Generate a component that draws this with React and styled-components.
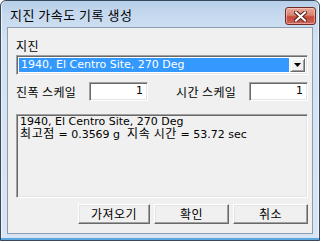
import React from "react";
import styled, { createGlobalStyle } from "styled-components";

const GlobalStyle = createGlobalStyle`
  html, body {
    margin: 0;
    padding: 0;
    background: #ffffff;
  }
  body {
    font-family: "Noto Sans CJK KR", "DejaVu Sans", sans-serif;
  }
`;

const Window = styled.div`
  box-sizing: border-box;
  width: 320px;
  height: 241px;
  display: flex;
  flex-direction: column;
  border: 1px solid #39475a;
  border-radius: 6px 6px 0 0;
  background: linear-gradient(to bottom, #b7cfe9 0px, #c6d9ee 14px, #d3e2f3 40px, #d8e5f4 100%);
  box-shadow: inset 0 -2px 0 #58a7dd, inset 1px 0 0 #eef4fb, inset -1px 0 0 #eef4fb;
  overflow: hidden;
`;

const TitleBar = styled.div`
  height: 26px;
  display: flex;
  align-items: flex-start;
  justify-content: space-between;
  padding: 0 3px 0 9px;
`;

const Title = styled.span`
  margin-top: 5px;
  font-size: 13px;
  line-height: 17px;
  letter-spacing: 0.5px;
  color: #000;
`;

const CloseButton = styled.div`
  margin-top: 6px;
  width: 29px;
  height: 16px;
  border: 1px solid #6e2c24;
  border-radius: 3px;
  background: linear-gradient(to bottom, #e9a99b 0%, #d8826f 45%, #c5473a 55%, #d0645a 100%);
  display: flex;
  align-items: center;
  justify-content: center;
  box-shadow: inset 0 0 0 1px rgba(255, 220, 210, 0.5);
`;

const Client = styled.div`
  flex: 1;
  margin: 0 6px 6px 6px;
  background: #f0f0f0;
  border: 1px solid #8d9cae;
  padding: 10px 4px 0 8px;
  display: flex;
  flex-direction: column;
`;

const FieldLabel = styled.div`
  font-size: 12px;
  line-height: 16px;
  letter-spacing: 0.4px;
  color: #000;
  height: 16px;
  margin-bottom: 1px;
`;

const Combo = styled.div`
  box-sizing: border-box;
  height: 20px;
  display: flex;
  border-top: 1px solid #a0a0a0;
  border-left: 1px solid #a0a0a0;
  border-right: 1px solid #ffffff;
  border-bottom: 1px solid #ffffff;
  box-shadow: inset 1px 1px 0 #696969, inset -1px -1px 0 #e3e3e3;
  padding: 2px;
  background: #fff;
`;

const ComboValue = styled.div`
  flex: 1;
  background: #3399ff;
  color: #fff;
  font-family: "DejaVu Sans", sans-serif;
  font-size: 11px;
  line-height: 14px;
  padding-left: 2px;
  white-space: nowrap;
  overflow: hidden;
`;

const ComboButton = styled.div`
  box-sizing: border-box;
  width: 15px;
  height: 14px;
  margin-left: 1px;
  background: #f0f0f0;
  border-top: 1px solid #f0f0f0;
  border-left: 1px solid #f0f0f0;
  border-right: 1px solid #696969;
  border-bottom: 1px solid #696969;
  box-shadow: inset 1px 1px 0 #ffffff, inset -1px -1px 0 #a0a0a0;
  display: flex;
  align-items: center;
  justify-content: center;
`;

const ScaleRow = styled.div`
  display: flex;
  justify-content: space-between;
  margin-top: 7px;
  height: 19px;
`;

const ScaleGroup = styled.div`
  display: flex;
  align-items: center;
`;

const ScaleLabel = styled.span`
  width: 73px;
  font-size: 12px;
  line-height: 16px;
  letter-spacing: 0.4px;
  color: #000;
`;

const NumberBox = styled.div`
  box-sizing: border-box;
  width: 59px;
  height: 19px;
  background: #fff;
  border-top: 1px solid #a0a0a0;
  border-left: 1px solid #a0a0a0;
  border-right: 1px solid #ffffff;
  border-bottom: 1px solid #ffffff;
  box-shadow: inset 1px 1px 0 #696969, inset -1px -1px 0 #e3e3e3;
  font-family: "DejaVu Sans", sans-serif;
  font-size: 11px;
  line-height: 16px;
  text-align: right;
  padding-right: 4px;
  color: #000;
`;

const InfoBox = styled.div`
  box-sizing: border-box;
  margin-top: 13px;
  height: 84px;
  border-top: 1px solid #a0a0a0;
  border-left: 1px solid #a0a0a0;
  border-right: 1px solid #ffffff;
  border-bottom: 1px solid #ffffff;
  box-shadow: inset 1px 1px 0 #696969, inset -1px -1px 0 #e3e3e3;
  padding: 2px 3px 0 3px;
  color: #000;
`;

const InfoLine = styled.div`
  font-family: "DejaVu Sans", sans-serif;
  font-size: 11px;
  line-height: ${(p) => (p.$tall ? "12px" : "10px")};
  white-space: nowrap;
`;

const Hangul = styled.span`
  font-family: "Noto Sans CJK KR", sans-serif;
  font-size: 12px;
  letter-spacing: 0.6px;
`;

const ButtonRow = styled.div`
  display: flex;
  justify-content: flex-end;
  gap: 4px;
  margin-top: 6px;
`;

const Button = styled.div`
  box-sizing: border-box;
  width: ${(p) => p.$w}px;
  height: 20px;
  background: #f0f0f0;
  border-top: 1px solid #ffffff;
  border-left: 1px solid #ffffff;
  border-right: 1px solid #696969;
  border-bottom: 1px solid #696969;
  box-shadow: inset -1px -1px 0 #a0a0a0, inset 1px 1px 0 #e3e3e3;
  font-size: 12px;
  line-height: 17px;
  letter-spacing: 0.4px;
  text-align: center;
  color: #000;
`;

export default function App() {
  return (
    <>
      <GlobalStyle />
      <Window>
        <TitleBar>
          <Title>지진 가속도 기록 생성</Title>
          <CloseButton>
            <svg width="13" height="11" viewBox="0 0 13 11">
              <path d="M2 1.5 L11 9.5 M11 1.5 L2 9.5" stroke="#5a2018" strokeWidth="4" strokeLinecap="square" />
              <path d="M2 1.5 L11 9.5 M11 1.5 L2 9.5" stroke="#ffffff" strokeWidth="2" strokeLinecap="square" />
            </svg>
          </CloseButton>
        </TitleBar>
        <Client>
          <FieldLabel>지진</FieldLabel>
          <Combo>
            <ComboValue>1940, El Centro Site, 270 Deg</ComboValue>
            <ComboButton>
              <svg width="7" height="4" viewBox="0 0 7 4">
                <path d="M0 0 H7 L3.5 4 Z" fill="#000" />
              </svg>
            </ComboButton>
          </Combo>
          <ScaleRow>
            <ScaleGroup>
              <ScaleLabel>진폭 스케일</ScaleLabel>
              <NumberBox>1</NumberBox>
            </ScaleGroup>
            <ScaleGroup>
              <ScaleLabel>시간 스케일</ScaleLabel>
              <NumberBox>1</NumberBox>
            </ScaleGroup>
          </ScaleRow>
          <InfoBox>
            <InfoLine>1940, El Centro Site, 270 Deg</InfoLine>
            <InfoLine $tall>
              <Hangul>최고점</Hangul> = 0.3569 g&nbsp;&nbsp;<Hangul>지속 시간</Hangul> = 53.72 sec
            </InfoLine>
          </InfoBox>
          <ButtonRow>
            <Button $w={72}>가져오기</Button>
            <Button $w={75}>확인</Button>
            <Button $w={75}>취소</Button>
          </ButtonRow>
        </Client>
      </Window>
    </>
  );
}
